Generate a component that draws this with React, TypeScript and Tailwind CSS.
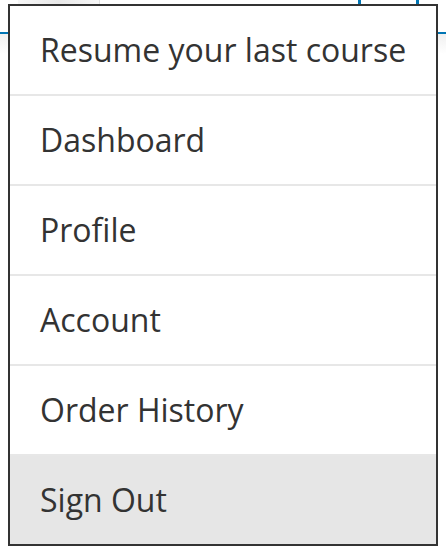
import React from "react";

const items = ["Resume your last course", "Dashboard", "Profile", "Account", "Order History", "Sign Out"];

export default function App() {
  return (
    <div
      className="relative w-[446px] h-[556px] bg-white overflow-hidden"
      style={{ fontFamily: '"Open Sans", sans-serif' }}
    >
      {/* background page header */}
      <div className="flex items-start h-[32px] bg-white">
        <div className="ml-[18px] w-[82px] h-[5px] bg-gradient-to-r from-[#f7f7f7] via-[#e8e8e8] to-[#f7f7f7] border-r border-[#e0e0e0]" />
        <div className="ml-[258px] w-[3px] h-[5px] bg-[#0075b4]" />
        <div className="ml-[55px] w-[3px] h-[5px] bg-[#0075b4]" />
      </div>
      <div className="h-[2px] bg-[#0075b4]" />
      <div className="h-[20px] bg-gradient-to-b from-[#f0f0f0] to-white" />

      {/* dropdown menu */}
      <ul className="absolute left-[8px] top-[4px] w-[430px] border-2 border-[#333333] bg-white">
        {items.map((label, i) => (
          <li
            key={label}
            className={
              "flex items-center pl-[30px] text-[32px] leading-none text-[#333333] " +
              (i === 0 ? "h-[88px] " : "h-[90px] border-t-2 border-[#e7e7e7] ") +
              (i === items.length - 1 ? "bg-[#e6e6e6]" : "bg-white")
            }
          >
            <span className="pb-[1px]">{label}</span>
          </li>
        ))}
      </ul>
    </div>
  );
}
